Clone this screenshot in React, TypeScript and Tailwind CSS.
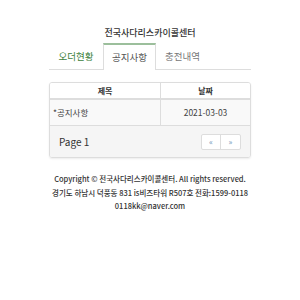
export default function App() {
  const font = { fontFamily: '"Noto Sans CJK KR", "Noto Sans", sans-serif' };
  return (
    <div className="w-[300px] h-[300px] bg-white" style={font}>
      <div className="w-[202px] mx-auto pt-[27px]">
        <h1 className="text-center text-[9px] leading-[12px] font-medium text-[#333]">
          전국사다리스카이콜센터
        </h1>

        {/* Tabs */}
        <div className="mt-[4px] flex border-b border-[#ddd]">
          <div className="w-[54px] h-[26px] flex items-center justify-center text-[9.5px] text-[#3d7f3d]">
            오더현황
          </div>
          <div className="w-[53px] h-[27px] -mb-px flex items-center justify-center text-[9.5px] text-[#555] bg-white border-x border-[#ddd] border-t-2 border-t-[#9cbf9c]">
            공지사항
          </div>
          <div className="w-[53px] h-[26px] flex items-center justify-center text-[9.5px] text-[#777]">
            충전내역
          </div>
        </div>

        {/* Table */}
        <div className="mt-[12px] border border-[#ddd] rounded-[3px] overflow-hidden shadow-[0_1px_2px_rgba(0,0,0,0.08)]">
          <div className="flex h-[17px] border-b-2 border-[#ddd] bg-white text-[8px] font-bold text-[#333]">
            <div className="w-[111px] flex items-center justify-center border-r border-[#ddd]">제목</div>
            <div className="flex-1 flex items-center justify-center">날짜</div>
          </div>
          <div className="flex h-[25px] bg-[#f9f9f9] text-[8.5px] text-[#444]">
            <div className="w-[111px] flex items-center pl-[3px] border-r border-[#ddd]">*공지사항</div>
            <div className="flex-1 flex items-center justify-center">2021-03-03</div>
          </div>
          <div className="flex h-[32px] items-center justify-between bg-[#f5f5f5] border-t border-[#ddd] px-[9px]">
            <span className="text-[10px] text-[#333]">Page 1</span>
            <div className="flex h-[16px] border border-[#ddd] rounded-[2px] bg-white text-[8px] text-[#6b8fb5]">
              <div className="w-[19px] flex items-center justify-center border-r border-[#ddd]">«</div>
              <div className="w-[19px] flex items-center justify-center">»</div>
            </div>
          </div>
        </div>

        {/* Footer */}
        <div className="mt-[14px] text-center text-[7.5px] leading-[13.5px] text-[#333] font-medium whitespace-nowrap">
          <p>Copyright © 전국사다리스카이콜센터. All rights reserved.</p>
          <p>경기도 하남시 덕풍동 831 is비즈타워 R507호 전화:1599-0118</p>
          <p>0118kk@naver.com</p>
        </div>
      </div>
    </div>
  );
}
